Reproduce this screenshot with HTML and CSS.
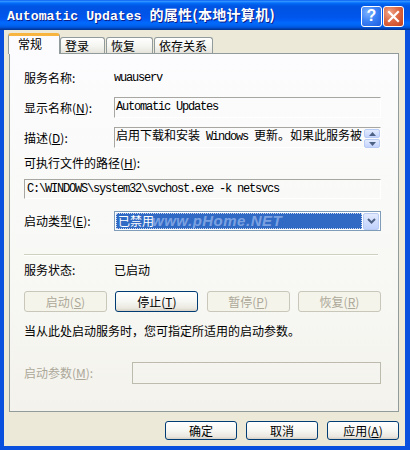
FILE: index.html
```html
<!DOCTYPE html>
<html lang="zh-CN">
<head>
<meta charset="utf-8">
<title>Automatic Updates 的属性</title>
<link rel="stylesheet" href="styles.css">
</head>
<body>
<div class="window">
  <div class="titlebar">
    <div class="title"><span class="tl">Automatic Updates </span><span class="tc">的属性(本地计算机)</span></div>
    <div class="tbtns">
      <span class="tb help">?</span>
      <span class="tb close"><svg width="13" height="13" viewBox="0 0 13 13"><path d="M2 2 L11 11 M11 2 L2 11" stroke="#fff" stroke-width="2.2" stroke-linecap="square"/></svg></span>
    </div>
  </div>
  <div class="frame">
    <div class="client">
      <div class="tabs">
        <div class="tab active t1">常规</div>
        <div class="tab t2">登录</div>
        <div class="tab t3">恢复</div>
        <div class="tab t4">依存关系</div>
      </div>
      <div class="panel">
        <div class="row r1"><span class="lbl">服务名称:</span><span class="mono">wuauserv</span></div>
        <div class="row r2"><span class="lbl">显示名称(<u>N</u>):</span><div class="edit ro"><span class="mono">Automatic Updates</span></div></div>
        <div class="row r3"><span class="lbl">描述(<u>D</u>):</span><div class="edit ro desc"><span class="dtext">启用下载和安装<span class="mono"> Windows </span>更新。如果此服务被</span><div class="spin"><span class="sb"><svg width="7" height="4" viewBox="0 0 7 4"><path d="M0 4 L3.5 0 L7 4Z" fill="#4D6185"/></svg></span><span class="sb"><svg width="7" height="4" viewBox="0 0 7 4"><path d="M0 0 L3.5 4 L7 0Z" fill="#4D6185"/></svg></span></div></div></div>
        <div class="row r4"><span>可执行文件的路径(<u>H</u>):</span></div>
        <div class="row r5"><div class="edit ro path"><span class="mono">C:\WINDOWS\system32\svchost.exe -k netsvcs</span></div></div>
        <div class="row r6"><span class="lbl">启动类型(<u>E</u>):</span><div class="combo"><div class="sel"><span>已禁用</span><span class="wm">www.pHome.NET</span></div><span class="ddb"><svg width="9" height="6" viewBox="0 0 9 6"><path d="M1 1 L4.5 4.5 L8 1" fill="none" stroke="#4D6185" stroke-width="2"/></svg></span></div></div>
        <div class="sep"></div>
        <div class="row r7"><span class="lbl">服务状态:</span><span>已启动</span></div>
        <div class="row r8">
          <button class="btn dis">启动(<u>S</u>)</button>
          <button class="btn">停止(<u>T</u>)</button>
          <button class="btn dis">暂停(<u>P</u>)</button>
          <button class="btn dis">恢复(<u>R</u>)</button>
        </div>
        <div class="row r9"><span>当从此处启动服务时，您可指定所适用的启动参数。</span></div>
        <div class="row r10"><span class="lbl wide dtxt">启动参数(<u>M</u>):</span><div class="edit disabled"></div></div>
      </div>
      <div class="dlgbtns">
        <button class="btn db">确定</button>
        <button class="btn db">取消</button>
        <button class="btn db">应用(<u>A</u>)</button>
      </div>
    </div>
  </div>
</div>
</body>
</html>
```

FILE: styles.css
```css
* { box-sizing: border-box; margin: 0; padding: 0; }
html, body { width: 410px; height: 450px; overflow: hidden; background: #fff; }
body {
  font-family: "Noto Sans CJK SC", "Liberation Sans", sans-serif;
  font-size: 12px;
  line-height: 16px;
  color: #000;
}
u { text-decoration: underline; text-underline-offset: 1px; }

.window { width: 410px; height: 450px; display: flex; flex-direction: column; }

.titlebar {
  height: 30px;
  flex: none;
  display: flex;
  align-items: center;
  padding: 1px 6px 0 7px;
  color: #fff;
  background: linear-gradient(to bottom, #0058EE 0%, #3593FF 4%, #288EFF 6%, #127DFF 8%, #036FFC 10%, #0262EE 14%, #0057E5 20%, #0054E3 24%, #0055EB 56%, #005BF5 66%, #026AFE 76%, #0062EF 86%, #0052D6 92%, #0040AB 96%, #003092 100%);
}
.title { flex: 1; font-weight: bold; white-space: nowrap; text-shadow: 1px 1px #0A1E8A; }
.title .tl { font-family: "Liberation Mono", monospace; font-size: 13.2px; white-space: pre; }
.title .tc { font-size: 14px; letter-spacing: 0.3px; }
.tbtns { display: flex; gap: 1px; margin-top: 1px; }
.tb {
  width: 21px; height: 21px;
  border: 1px solid #fff;
  border-radius: 3px;
  display: flex; align-items: center; justify-content: center;
}
.help {
  background: radial-gradient(circle at 30% 30%, #7DB2FF 0%, #3C82F6 45%, #1B5BE0 100%);
  font-family: "Liberation Sans", sans-serif;
  font-weight: bold;
  font-size: 16px;
  line-height: 16px;
  color: #fff;
}
.close {
  background: radial-gradient(circle at 30% 30%, #F0A68A 0%, #DE6A45 45%, #C5401C 100%);
}

.frame {
  flex: 1;
  display: flex;
  border-style: solid;
  border-color: #0A50DF;
  border-width: 0 5px 4px 4px;
}
.client {
  flex: 1;
  background: #ECE9D8;
  padding: 3px 6px 0 5px;
  display: flex;
  flex-direction: column;
}

/* tabs */
.tabs { height: 20px; display: flex; align-items: flex-end; flex: none; }
.tab {
  height: 16px;
  border: 1px solid #919B9C;
  border-bottom: none;
  border-radius: 3px 3px 0 0;
  background: linear-gradient(to bottom, #FFFFFF, #F3F3EF 60%, #E4E3DB);
  padding: 0 0 0 4px;
  line-height: 16px;
}
.tab.active {
  height: 21px;
  margin-bottom: -1px;
  margin-left: -1px;
  border-top: 3px solid #F7B540;
  background: #FCFCFE;
  padding-left: 9px;
  line-height: 15px;
  position: relative;
  z-index: 1;
}
.t1 { width: 52px; }
.t2 { width: 45px; }
.t3 { width: 47px; margin-left: 1px; }
.t4 { width: 59px; margin-left: 1px; }

/* panel */
.panel {
  height: 359px;
  flex: none;
  border: 1px solid #919B9C;
  background: linear-gradient(to bottom, #FCFCFE, #F7F7F3 70%, #F3F2EC);
  padding: 0 17px 0 14px;
  display: flex;
  flex-direction: column;
}
.row { display: flex; align-items: center; flex: none; }
.lbl { width: 90px; flex: none; }
.lbl.wide { width: 108px; }
.dtxt { color: #ACA899; }
.mono { font-family: "Liberation Mono", monospace; letter-spacing: -1.2px; white-space: pre; }

.r1 { margin-top: 16px; height: 16px; }
.r2 { margin-top: 11px; height: 21px; }
.r3 { margin-top: 9px; height: 21px; }
.r4 { margin-top: 7px; height: 16px; }
.r5 { margin-top: 8px; height: 20px; }
.r6 { margin-top: 12px; height: 20px; }
.sep { margin-top: 23px; height: 2px; border-top: 1px solid #D0D0BF; border-bottom: 1px solid #fff; margin-right: 3px; flex: none; }
.r7 { margin-top: 6px; height: 16px; }
.r8 { margin-top: 13px; height: 21px; justify-content: space-between; }
.r9 { margin-top: 11px; height: 16px; }
.r10 { margin-top: 23px; height: 22px; }

.edit { flex: 1; height: 100%; }
.edit.ro {
  border-top: 1px solid #A7A6A0;
  border-left: 1px solid #A7A6A0;
  border-right: 1px solid #FFFFFF;
  border-bottom: 1px solid #FFFFFF;
  padding: 0 1px;
  line-height: 14px;
  white-space: nowrap;
}
.edit.path { padding-left: 2px; }
.edit.desc { display: flex; align-items: flex-start; padding-right: 0; }
.dtext { flex: 1; white-space: nowrap; }
.spin { display: flex; flex-direction: column; gap: 1px; width: 16px; flex: none; margin-top: 1px; }
.sb {
  height: 9px;
  border: 1px solid #B7CBF5;
  border-radius: 2px;
  background: linear-gradient(to bottom, #E3EBFE, #C3D3FD);
  display: flex; align-items: center; justify-content: center;
}
.edit.disabled { border: 1px solid #BDBAAE; background: transparent; }

.combo {
  flex: 1;
  height: 20px;
  border: 1px solid #7F9DB9;
  background: #fff;
  display: flex;
  align-items: center;
  padding: 1px;
  gap: 1px;
}
.sel {
  flex: 1;
  height: 16px;
  background: #316AC5;
  color: #fff;
  border: 1px dotted #0F1C4A;
  outline: 1px dotted #C9D6EE;
  outline-offset: -1px;
  line-height: 14px;
  padding-left: 1px;
  white-space: nowrap;
  overflow: hidden;
  display: flex;
}
.wm {
  font-family: "Liberation Sans", sans-serif;
  font-weight: bold;
  font-style: italic;
  font-size: 15px;
  color: rgba(190, 210, 250, 0.55);
  letter-spacing: 0.5px;
  margin-left: -2px;
}
.ddb {
  width: 16px;
  height: 17px;
  flex: none;
  border: 1px solid #B9CCF4;
  border-radius: 2px;
  background: linear-gradient(to bottom, #E2EAFE, #C0D1FC);
  display: flex; align-items: center; justify-content: center;
}

.btn {
  font-family: "Noto Sans CJK SC", "Liberation Sans", sans-serif;
  font-size: 12px;
  line-height: 16px;
  color: #000;
  width: 83px;
  height: 21px;
  border: 1px solid #003C74;
  border-radius: 3px;
  background: linear-gradient(to bottom, #FFFFFF 0%, #F6F6F3 50%, #EAE8E0 85%, #D6D0C5 100%);
}
.btn.dis {
  color: #ACA899;
  border-color: #C9C7BA;
  background: #F5F4EA;
}

.dlgbtns {
  margin-top: 9px;
  display: flex;
  justify-content: flex-end;
  gap: 9px;
  flex: none;
}
.btn.db { width: 72px; height: 19px; line-height: 15px; }
```
